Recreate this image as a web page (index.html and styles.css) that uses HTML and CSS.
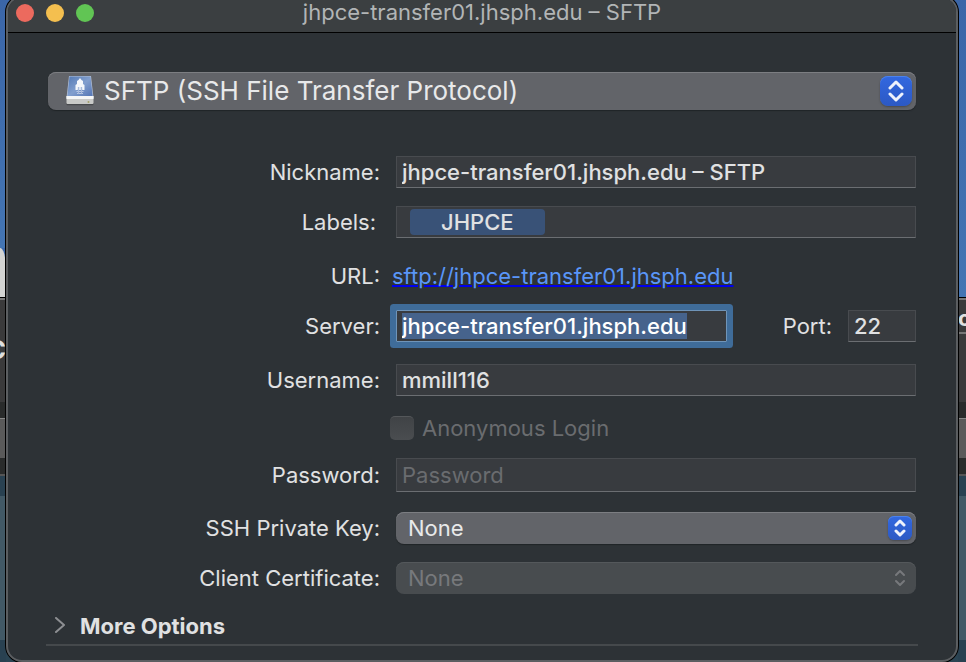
FILE: index.html
```html
<!DOCTYPE html>
<html lang="en">

<head>
    <meta charset="UTF-8" />
    <meta name="viewport" content="width=device-width, initial-scale=1.0" />
    <title>jhpce-transfer01.jhsph.edu – SFTP</title>
    <link rel="stylesheet" href="styles.css">
</head>

<body class="desktop">
    <div class="strip">
        <div class="sky"></div>
        <div class="cloud"></div>
        <div class="toolbar toolbar-left"><span class="letter letter-big">C</span></div>
        <div class="gap"></div>
        <div class="tab"></div>
        <div class="gap"></div>
        <div class="teal-dark"></div>
        <div class="teal"></div>
        <div class="teal-dark fill"></div>
    </div>
    <main class="window">
        <header class="titlebar">
            <div class="lights">
                <button type="button" class="light red" aria-label="Close"></button>
                <button type="button" class="light yellow" aria-label="Minimize"></button>
                <button type="button" class="light green" aria-label="Zoom"></button>
            </div>
            <h1 class="title">jhpce-transfer01.jhsph.edu – SFTP</h1>
        </header>
        <form class="form">
            <div class="popup popup-large">
                <select class="select" aria-label="Protocol">
                    <option>SFTP (SSH File Transfer Protocol)</option>
                </select>
                <svg class="disk" width="30" height="32" viewBox="0 0 30 32" aria-hidden="true">
                    <defs>
                        <linearGradient id="disk-top" x1="0" y1="0" x2="1" y2="1">
                            <stop offset="0" stop-color="#5279b5" />
                            <stop offset="0.5" stop-color="#829fce" />
                            <stop offset="1" stop-color="#5273b4" />
                        </linearGradient>
                    </defs>
                    <path d="M1.5 29h27v1.200q0 1-1 1h-25q-1 0-1-1z" fill="#484a4e" />
                    <path d="M4 2h22l2.500 22h-27z" fill="#b4c0d4" />
                    <path d="M4.500 2.500h21l2.200 20.500h-25.400z" fill="url(#disk-top)" />
                    <path d="M1.500 22h27v7q0 1-1 1h-25q-1 0-1-1z" fill="#c9cac8" />
                    <path d="M1.500 22h27v3h-27z" fill="#f5f6f6" />
                    <path d="M15 4l1.500 2 1.500 1v3l1.500 1v5h-2l-1-2h-3l-1 2h-2v-5l1.500-1v-3l1.500-1z" fill="#f4f7fb" />
                    <path d="M12.500 13h5v3h-5z" fill="#dbe4f2" />
                    <path d="M11.500 17.500h7M12 19.500h6" stroke="#b9c8e4" stroke-width="1" />
                    <path d="M13.500 13v7M16.500 13v7" stroke="#a9bbdc" stroke-width="1" />
                    <circle cx="23.500" cy="28" r="1" fill="#a3a06b" />
                </svg>
                <span class="stepper">
                    <svg width="16" height="22" viewBox="0 0 16 22" aria-hidden="true">
                        <path d="M2 8l6-6 6 6M2 14l6 6 6-6" />
                    </svg>
                </span>
            </div>
            <div class="row row-first">
                <label class="label" for="nickname">Nickname:</label>
                <input class="field" type="text" id="nickname" value="jhpce-transfer01.jhsph.edu – SFTP" />
            </div>
            <div class="row row-labels">
                <span class="label">Labels:</span>
                <div class="field tokens">
                    <span class="token">JHPCE</span>
                </div>
            </div>
            <div class="row row-loose row-link">
                <span class="label">URL:</span>
                <a class="link" href="sftp://jhpce-transfer01.jhsph.edu">sftp://jhpce-transfer01.jhsph.edu</a>
            </div>
            <div class="row">
                <label class="label" for="server">Server:</label>
                <input class="field" type="text" id="server" value="jhpce-transfer01.jhsph.edu" autofocus />
                <label class="port-label" for="port">Port:</label>
                <input class="field port" type="text" id="port" value="22" />
            </div>
            <div class="row row-loose">
                <label class="label" for="username">Username:</label>
                <input class="field" type="text" id="username" value="mmill116" />
            </div>
            <div class="row row-check">
                <span class="label"></span>
                <input class="check" type="checkbox" id="anonymous" disabled />
                <label class="check-label" for="anonymous">Anonymous Login</label>
            </div>
            <div class="row">
                <label class="label" for="password">Password:</label>
                <input class="field password" type="password" id="password" placeholder="Password" />
            </div>
            <div class="row row-key">
                <label class="label" for="key">SSH Private Key:</label>
                <div class="popup">
                    <select class="select" id="key">
                        <option>None</option>
                    </select>
                    <span class="stepper">
                        <svg width="12" height="18" viewBox="0 0 12 18" aria-hidden="true">
                            <path d="M2 6l4-4 4 4M2 12l4 4 4-4" />
                        </svg>
                    </span>
                </div>
            </div>
            <div class="row">
                <label class="label" for="certificate">Client Certificate:</label>
                <div class="popup popup-disabled">
                    <select class="select" id="certificate" disabled>
                        <option>None</option>
                    </select>
                    <span class="stepper">
                        <svg width="12" height="18" viewBox="0 0 12 18" aria-hidden="true">
                            <path d="M2 6l4-4 4 4M2 12l4 4 4-4" />
                        </svg>
                    </span>
                </div>
            </div>
            <button type="button" class="more">
                <svg width="12" height="18" viewBox="0 0 12 18" aria-hidden="true">
                    <path d="M2 1l8 7-8 7" />
                </svg>
                More Options
            </button>
        </form>
    </main>
    <div class="strip">
        <div class="sky sky-tall"></div>
        <div class="toolbar toolbar-short"><span class="letter">c</span></div>
        <div class="toolbar toolbar-rest"></div>
        <div class="gap"></div>
        <div class="tab"></div>
        <div class="gap"></div>
        <div class="teal-dark"></div>
        <div class="teal"></div>
        <div class="teal-dark fill"></div>
    </div>
    <script>
        "use strict";
        document.querySelector("#server").focus();
        document.querySelector("#server").select();
    </script>
</body>

</html>
```
FILE: styles.css
```css
* {
    box-sizing: border-box;
}

.desktop {
    margin: 0;
    min-height: 100vh;
    display: grid;
    grid-template-columns: 6px minmax(0, 1fr) 8px;
    overflow: hidden;
    background: linear-gradient(#3c67a8 60%, #2b4453 60%);
    color: #e0e1e2;
    font-family: Inter, "Liberation Sans", sans-serif;
    font-size: 22px;
    line-height: 28px;
}

/* slices of the desktop on both sides of the window */
.strip {
    display: flex;
    flex-direction: column;
    overflow: hidden;
}

.sky {
    height: 248px;
    background: linear-gradient(#3b66a8, #4475b3);
}

.sky-tall {
    height: 297px;
}

.cloud {
    height: 49px;
    background: #d3d4d3;
    border-top-right-radius: 6px 20px;
}

.toolbar {
    display: flex;
    height: 105px;
    border-top: 1px solid #000;
    box-shadow: inset 0 2px #777;
    background: #3a3a3b;
}

.toolbar-left {
    justify-content: flex-end;
}

.toolbar-short {
    height: 35px;
}

.toolbar-rest {
    height: 70px;
    border-top: 0;
}

.letter {
    padding-top: 6px;
    color: #e0e0e0;
    font-weight: 700;
}

.letter-big {
    padding-top: 38px;
    font-size: 26px;
}

.gap {
    height: 16px;
    background: #292b2b;
}

.tab {
    height: 40px;
    border-top: 1px solid #888;
    background: #5a5a5a;
}

.teal-dark {
    height: 22px;
    border-top: 2px solid #555;
    background: #294151;
}

.teal {
    height: 144px;
    background: #425966;
}

.fill {
    flex: 1;
    border-top: 0;
}

.window {
    z-index: 1;
    margin-top: -4px;
    border: 2px solid #5b5e61;
    border-radius: 16px;
    box-shadow: 0 0 0 1px #000;
    background: #2d3236;
}

.titlebar {
    position: relative;
    height: 35px;
    border-bottom: 1px solid #000;
    border-radius: 14px 14px 0 0;
    background: #3b3f41;
}

.lights {
    position: absolute;
    left: 8px;
    top: 6px;
    display: flex;
    gap: 12px;
}

.light {
    width: 18px;
    height: 18px;
    padding: 0;
    border: 0;
    border-radius: 50%;
}

.red {
    background: #ec6a5e;
}

.yellow {
    background: #f4bf4f;
}

.green {
    background: #61c554;
}

.title {
    margin: 0;
    text-align: center;
    color: #b2b5b6;
    font-size: 22px;
    font-weight: 400;
    line-height: 28px;
}

.form {
    padding: 39px 40px 14px;
}

.row {
    display: flex;
    align-items: center;
    gap: 16px;
    margin-top: 18px;
}

.row-first {
    margin-top: 46px;
}

.row-loose {
    margin-top: 22px;
}

.row-key,
.row-check {
    margin-top: 20px;
}

.row-labels {
    gap: 20px;
}

.row-labels .label {
    width: 328px;
}

.row-link {
    height: 32px;
    gap: 12px;
}

.row-check {
    height: 24px;
    gap: 8px;
}

.row-check .label {
    width: 334px;
}

.label {
    flex: none;
    width: 332px;
    text-align: right;
}

.field {
    flex: 1;
    min-width: 0;
    height: 32px;
    padding: 0 5px;
    border: 1px solid #484b4f;
    border-bottom-color: #6b6e72;
    border-radius: 0;
    outline: 0;
    background: #383b3f;
    color: #e0e1e2;
    font: inherit;
    font-weight: 500;
}

.field:focus {
    border-color: #6f94b8;
    border-radius: 1px;
    box-shadow: 0 0 0 6px #3f6c99;
    color: #fff;
}

.field::selection {
    background: #46638c;
    color: #fff;
}

.field::placeholder {
    color: #6a6c6f;
    font-weight: 400;
    opacity: 1;
}

.password {
    height: 34px;
}

.tokens {
    display: flex;
    align-items: center;
    padding: 0 13px;
}

.token {
    padding: 0 31px;
    border-radius: 4px;
    background: #395277;
    line-height: 26px;
}

.link {
    color: #5a96f8;
    text-decoration: underline 2px #0000ee;
}

.port-label {
    margin-left: 40px;
}

.port {
    flex: none;
    width: 68px;
}

.check {
    appearance: none;
    flex: none;
    width: 24px;
    height: 24px;
    margin: 0;
    border-top: 1px solid #54575a;
    border-radius: 5px;
    background: linear-gradient(#404346, #4a4d50);
}

.check-label {
    color: #6a6c6f;
}

.popup {
    position: relative;
    flex: 1;
}

.select {
    appearance: none;
    display: block;
    width: 100%;
    height: 32px;
    padding: 0 40px 0 12px;
    border: 0;
    border-radius: 8px;
    box-shadow: inset 0 1px #7c7e82, 0 1px 1px #202427;
    background: #626469;
    color: #e8e9ea;
    font: inherit;
}

.stepper {
    position: absolute;
    top: 4px;
    right: 4px;
    display: flex;
    align-items: center;
    justify-content: center;
    width: 24px;
    height: 24px;
    border-radius: 6px;
    box-shadow: inset 0 1px #4b82ec, 0 1px 2px #484a4e;
    background: linear-gradient(#3268e0, #2c59c4);
    pointer-events: none;
}

.stepper path,
.more path {
    fill: none;
    stroke: #eef2fc;
    stroke-width: 3;
    stroke-linecap: round;
    stroke-linejoin: round;
}

.popup-large .select {
    height: 38px;
    padding-left: 56px;
    font-size: 26px;
}

.popup-large .stepper {
    width: 32px;
    height: 30px;
    border-radius: 8px;
}

.disk {
    position: absolute;
    left: 17px;
    top: 2px;
    pointer-events: none;
}

.popup-disabled .select {
    box-shadow: inset 0 1px #54585b;
    background: #484c4f;
    color: #77797c;
    opacity: 1;
}

.popup-disabled .stepper {
    box-shadow: none;
    background: none;
}

.popup-disabled .stepper path {
    stroke: #77797c;
    stroke-width: 2;
}

.more {
    display: flex;
    align-items: center;
    gap: 14px;
    width: calc(100% + 4px);
    height: 38px;
    margin: 14px -2px 0;
    padding: 0 8px;
    border: 0;
    border-bottom: 2px solid #45494c;
    background: none;
    color: #e0e1e2;
    font: inherit;
    font-weight: 700;
}

.more path {
    stroke: #8d8f92;
    stroke-width: 2;
}
```
